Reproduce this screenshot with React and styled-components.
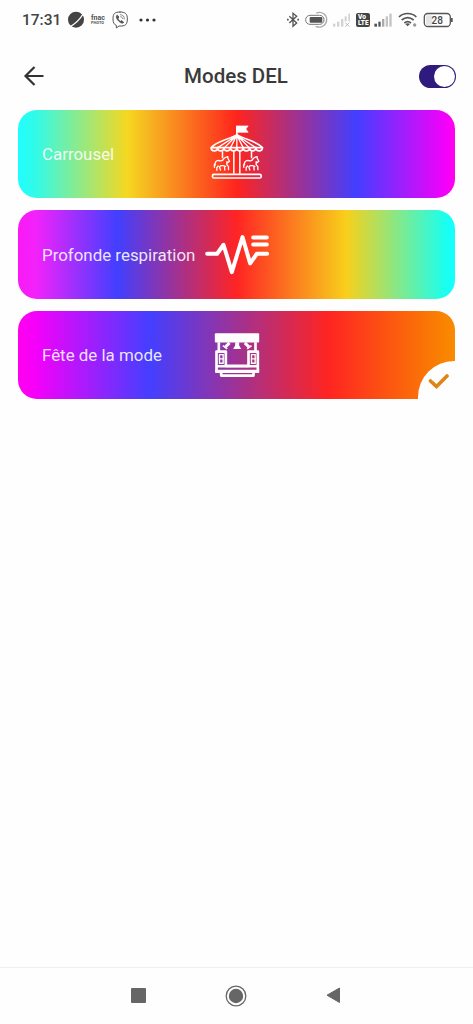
import React, { useState } from "react";
import styled, { createGlobalStyle } from "styled-components";

const GlobalStyle = createGlobalStyle`
  * {
    box-sizing: border-box;
  }

  body {
    margin: 0;
    background-color: #fefefe;
    font-family: Roboto, sans-serif;
  }
`;

const Screen = styled.div`
  display: flex;
  flex-direction: column;
  width: 473px;
  height: 1024px;
  overflow: hidden;
  background-color: #fefefe;
`;

const StatusBar = styled.div`
  display: flex;
  justify-content: space-between;
  align-items: center;
  height: 40px;
  padding: 0 19px 0 22px;
`;

const StatusGroup = styled.div`
  display: flex;
  align-items: center;
  gap: ${(props) => props.$gap}px;
`;

const Clock = styled.span`
  margin-right: 1px;
  font-size: 15.5px;
  font-weight: 500;
  line-height: 20px;
  color: #444;
`;

const Icon = styled.svg`
  display: block;
  flex: none;
`;

const Header = styled.header`
  display: grid;
  grid-template-columns: 40px 1fr 40px;
  align-items: center;
  height: 69px;
  padding: 3px 17px 0 22px;
`;

const BackButton = styled.button`
  width: 24px;
  height: 24px;
  padding: 0;
  border: none;
  background: none;
  cursor: pointer;
`;

const Title = styled.h1`
  margin: 0 6px 0 0;
  text-align: center;
  font-size: 20.5px;
  font-weight: 500;
  line-height: 24px;
  color: #3a3a3a;
`;

const Toggle = styled.button`
  display: flex;
  justify-content: ${(props) => (props.$on ? "flex-end" : "flex-start")};
  justify-self: end;
  width: 37px;
  height: 23px;
  padding: 1px;
  border: none;
  border-radius: 12px;
  background-color: ${(props) => (props.$on ? "#2f1a7d" : "#bbb")};
  cursor: pointer;
`;

const Knob = styled.span`
  width: 21px;
  height: 21px;
  border-radius: 50%;
  background-color: white;
`;

const ModeList = styled.main`
  display: flex;
  flex-direction: column;
  flex: 1;
  gap: 12px;
  padding: 0.5px 18px 0;
`;

const ModeCard = styled.div`
  position: relative;
  display: grid;
  grid-template-columns: 1fr auto 1fr;
  align-items: center;
  height: 88.5px;
  border-radius: ${(props) => (props.$selected ? "19px 19px 0 19px" : "19px")};
  background: linear-gradient(90deg, ${(props) => props.$colors});
  cursor: pointer;
`;

const ModeLabel = styled.span`
  min-width: 0;
  padding: 1px 0 0 24px;
  font-size: 16.9px;
  line-height: 20px;
  white-space: nowrap;
  color: rgba(255, 255, 255, 0.88);
`;

const SelectedBadge = styled.div`
  position: absolute;
  right: -1px;
  bottom: -1px;
  display: flex;
  justify-content: center;
  align-items: center;
  width: 38px;
  height: 39px;
  padding-left: 3px;
  border-top-left-radius: 36px;
  background-color: #fefefe;
`;

const NavBar = styled.nav`
  display: flex;
  justify-content: center;
  align-items: center;
  gap: 79px;
  height: 57px;
  padding: 0 2px 1px 0;
  border-top: 1px solid #efefef;
`;

const CarouselIcon = () => (
  <Icon width="60" height="60" viewBox="35.5 26.1 180 180" fill="none" stroke="#fff" strokeLinejoin="round">
    <path d="M125 60V31" strokeWidth="5" />
    <path d="M125 32H159L152 41L159 51H125Z" fill="#fff" strokeWidth="2" />
    <path d="M48 97C65 78 95 75 125 58C155 75 185 78 202 97Z" strokeWidth="5" />
    <path
      d="M125 60L68 97M125 60L88 97M125 60L106 97M125 60V97M125 60L144 97M125 60L162 97M125 60L182 97"
      strokeWidth="4"
    />
    <path
      d="M48 97a9.6 9.6 0 0 0 19.2 0a9.6 9.6 0 0 0 19.2 0a9.6 9.6 0 0 0 19.2 0a9.6 9.6 0 0 0 19.2 0a9.6 9.6 0 0 0 19.2 0a9.6 9.6 0 0 0 19.2 0a9.6 9.6 0 0 0 19.2 0a9.6 9.6 0 0 0 19.2 0"
      strokeWidth="5"
    />
    <path d="M116 107V175M134 107V175M82 108V129M169 108V129" strokeWidth="4.5" />
    <rect x="52" y="177" width="146" height="11" rx="4" strokeWidth="5" />
    <g strokeWidth="4" strokeLinecap="round">
      <path
        id="horse"
        d="M60 149C59 141 63 135 70 135C77 138 84 136 87 129C90 125 95 125 98 124L98 129L103 138L98 142L95 139L95 148L100 154V163M91 153L84 151L77 151L73 155L76 164M69 152L65 157V165M88 154L89 164M60 144C56 147 57 152 58 156"
      />
      <use href="#horse" x="88" />
    </g>
  </Icon>
);

const PulseIcon = () => (
  <Icon
    width="72"
    height="48"
    viewBox="16.5 30.75 216 144"
    fill="none"
    stroke="#fff"
    strokeWidth="12"
    strokeLinecap="round"
    strokeLinejoin="round"
  >
    <path d="M35 102H65L84 75L109 157L141 52L164 131L184 102H215" />
    <path d="M173 53H214M173 74H214" />
  </Icon>
);

const StageIcon = () => (
  <Icon width="54" height="54" viewBox="43.5 23.25 162 162" fill="none" stroke="#fff" strokeWidth="6">
    <rect x="58" y="39" width="133" height="28" rx="3" fill="#fff" stroke="none" />
    <path d="M70 66V94M180 66V94" strokeWidth="8" />
    <path d="M102 68L90 80M148 68L160 80" strokeWidth="9" />
    <path d="M82 76L95 86M168 76L155 86" strokeWidth="5" />
    <path d="M119 66H131V76L137 86H113L119 76Z" fill="#fff" stroke="none" />
    <path d="M63 94H91V137H159V94H187V154H63Z" strokeWidth="8" strokeLinejoin="round" />
    <path d="M72 103H83V129H72ZM168 103H179V129H168Z" strokeWidth="4" />
    <path d="M70 116H85M166 116H181" strokeWidth="4" />
    <path d="M63 138H188" strokeWidth="8" />
    <path d="M59 153H191" strokeWidth="9" />
    <path d="M77 154V166H174V154" strokeWidth="8" strokeLinejoin="round" />
  </Icon>
);

const modes = [
  {
    name: "Carrousel",
    colors: "#1effff 0%, #32fae8 4%, #f5d821 25%, #ff241d 50%, #423fff 77.3%, #f500fa 98%, #ff00f0 100%",
    icon: <CarouselIcon />,
  },
  {
    name: "Profonde respiration",
    colors: "#fa19f5 0%, #f322fb 4%, #423fff 22.7%, #ff2424 50%, #f8d01b 75.2%, #19fff0 98%, #14ffff 100%",
    icon: <PulseIcon />,
  },
  {
    name: "Fête de la mode",
    colors: "#ff00ee 0%, #f500fa 4%, #443fff 30.2%, #ff2422 71%, #f98500 98%, #f98a00 100%",
    icon: <StageIcon />,
  },
];

const NotificationIcons = () => (
  <>
    <Icon width="18" height="18" viewBox="200 33 54 54">
      <circle cx="227" cy="59" r="24" fill="#444" />
      <path d="M206 82C225 72 238 60 250 39" fill="none" stroke="#fefefe" strokeWidth="4" />
    </Icon>
    <Icon width="16" height="14" viewBox="0 0 16 14" fill="#555">
      <text x="1" y="6.8" fontSize="7" fontWeight="700" textLength="14" lengthAdjust="spacingAndGlyphs">
        fnac
      </text>
      <text x="1" y="11" fontSize="4.3" fontWeight="700" textLength="13" lengthAdjust="spacingAndGlyphs">
        PHOTO
      </text>
    </Icon>
    <Icon width="18" height="18" viewBox="332 31 54 54" fill="none" stroke="#555" strokeWidth="3" strokeLinecap="round">
      <path d="M359 34C343 34 338 39 338 55C338 66 341 71 348 74V82L356 76C375 77 381 72 381 55C381 39 375 34 359 34Z" />
      <path d="M350 44C346 46 348 54 355 61C362 68 368 69 370 65L364 60L360 62C356 60 354 57 353 53L355 50Z" fill="#555" />
      <path d="M360 42C368 42 372 47 372 55M361 48C365 48 367 51 367 54" strokeWidth="2" />
    </Icon>
    <Icon width="22" height="6" viewBox="-4 0 22 6" fill="#333">
      <circle cx="3" cy="3" r="1.6" />
      <circle cx="9.5" cy="3" r="1.6" />
      <circle cx="16" cy="3" r="1.6" />
    </Icon>
  </>
);

const SystemIcons = () => (
  <>
    <Icon width="14" height="16" viewBox="19 36 42 48" fill="none" stroke="#555" strokeWidth="4">
      <path d="M29 49L51 69L40 79V40L51 49L29 69" />
      <path d="M22 59H27M53 59H58" strokeWidth="5" />
    </Icon>
    <Icon width="24" height="18" viewBox="75 33 72 54" fill="none">
      <path d="M109 39C128 33 140 45 140 59C140 73 126 87 107 79" stroke="#aaa" strokeWidth="4" />
      <rect x="77" y="46" width="55" height="27" rx="13" fill="#fefefe" stroke="#777" strokeWidth="3" />
      <rect x="89" y="51" width="38" height="17" rx="3" fill="#555" />
    </Icon>
    <Icon width="18" height="16" viewBox="159 35 54 48" fill="#d2d2d2">
      <rect x="159" y="70" width="7" height="9" />
      <rect x="171" y="64" width="7" height="15" />
      <rect x="183" y="56" width="7" height="23" />
      <rect x="194" y="48" width="6" height="15" />
      <rect x="205" y="40" width="5" height="23" />
      <path d="M196 67L208 79M208 67L196 79" stroke="#bbb" strokeWidth="3" />
    </Icon>
    <Icon width="14" height="14" viewBox="0 0 14 14">
      <rect width="14" height="14" rx="2" fill="#444" />
      <g fill="#fff" fontSize="6.5" fontWeight="900">
        <text x="2" y="6.3" textLength="8" lengthAdjust="spacingAndGlyphs">
          Vo
        </text>
        <text x="2" y="12.3" textLength="10.5" lengthAdjust="spacingAndGlyphs">
          LTE
        </text>
      </g>
    </Icon>
    <Icon width="18" height="16" viewBox="281 35 54 48" fill="#c4c4c4">
      <rect x="282" y="70" width="8" height="9" fill="#555" />
      <rect x="294" y="64" width="7" height="15" fill="#555" />
      <rect x="305" y="56" width="7" height="23" fill="#aaa" />
      <rect x="316" y="48" width="7" height="31" />
      <rect x="327" y="40" width="7" height="39" />
    </Icon>
    <Icon width="22" height="16" viewBox="350 36 66 48" fill="none" stroke="#555" strokeWidth="5">
      <path d="M356 51C370 37 394 37 408 51M364 60C375 51 389 51 400 60M372 69C378 64 386 64 392 69" />
      <path d="M375 72C379 69 385 69 389 72L382 79Z" fill="#555" stroke="none" />
      <circle cx="403" cy="75" r="5" fill="#999" stroke="none" />
    </Icon>
    <Icon width="31" height="16" viewBox="-0.5 0 31 16">
      <rect x="0.8" y="1.5" width="26" height="13" rx="3.5" fill="#fefefe" stroke="#555" strokeWidth="1.3" />
      <path d="M28.3 6V10" stroke="#555" strokeWidth="1.8" />
      <rect x="2.5" y="3.2" width="6.5" height="9.6" rx="1.5" fill="#e5e5e5" />
      <text x="13.8" y="11.5" textAnchor="middle" fontSize="10" fontWeight="500" fill="#444">
        28
      </text>
    </Icon>
  </>
);

const App = () => {
  const [enabled, setEnabled] = useState(true);
  const [selected, setSelected] = useState(2);

  return (
    <Screen>
      <GlobalStyle />
      <StatusBar>
        <StatusGroup $gap={5}>
          <Clock>17:31</Clock>
          <NotificationIcons />
        </StatusGroup>
        <StatusGroup $gap={4.5}>
          <SystemIcons />
        </StatusGroup>
      </StatusBar>
      <Header>
        <BackButton aria-label="Retour">
          <Icon width="24" height="24" viewBox="0 0 24 24" fill="none" stroke="#333" strokeWidth="2.2">
            <path d="M21.5 12H3.5M12.5 3L3.5 12L12.5 21" />
          </Icon>
        </BackButton>
        <Title>Modes DEL</Title>
        <Toggle $on={enabled} onClick={() => setEnabled(!enabled)}>
          <Knob />
        </Toggle>
      </Header>
      <ModeList>
        {modes.map((mode, index) => (
          <ModeCard
            key={mode.name}
            $colors={mode.colors}
            $selected={index === selected}
            onClick={() => setSelected(index)}
          >
            <ModeLabel>{mode.name}</ModeLabel>
            {mode.icon}
            {index === selected && (
              <SelectedBadge>
                <Icon width="22" height="18" viewBox="0 0 22 18" fill="none" stroke="#e08416" strokeWidth="3.6">
                  <path d="M2.5 9L8.5 14.5L19 4" strokeLinecap="round" />
                </Icon>
              </SelectedBadge>
            )}
          </ModeCard>
        ))}
      </ModeList>
      <NavBar>
        <Icon width="15" height="15" viewBox="0 0 15 15">
          <rect width="15" height="15" rx="1" fill="#666" />
        </Icon>
        <Icon width="22" height="22" viewBox="0 0 22 22">
          <circle cx="11" cy="11" r="9.8" fill="none" stroke="#666" strokeWidth="1.3" />
          <circle cx="11" cy="11" r="7.2" fill="#666" />
        </Icon>
        <Icon width="15" height="17" viewBox="1 0.5 15 17">
          <path d="M14.5 1.5V16L2 8.7Z" fill="#666" stroke="#666" strokeLinejoin="round" />
        </Icon>
      </NavBar>
    </Screen>
  );
};

export default App;
